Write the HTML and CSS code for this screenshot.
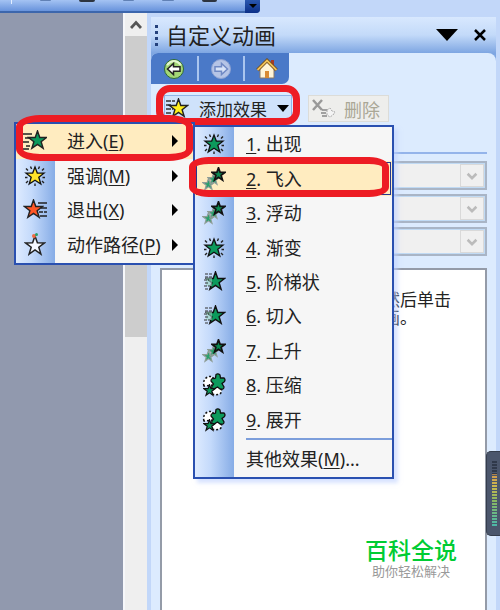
FILE: index.html
```html
<!DOCTYPE html>
<html lang="zh-CN">
<head>
    <meta charset="UTF-8">
    <meta name="viewport" content="width=device-width, initial-scale=1.0">
    <title>自定义动画</title>
    <link rel="stylesheet" href="styles.css">
</head>
<body>
<svg class="sprite" aria-hidden="true">
    <symbol id="star" viewBox="-11 -11 22 22">
        <path d="M0-10 2.4-3.2 9.5-3.1 3.8 1.2 5.9 8.1 0 4-5.9 8.1-3.8 1.2-9.5-3.1-2.4-3.2Z"/>
    </symbol>
    <symbol id="burst" viewBox="0 0 24 24">
        <path d="M12 3 14.300 9 21 9.200 15.800 13.300 17.800 20 12 16.200 6.200 20 8.200 13.300 3 9.200 9.700 9Z" stroke="#111" stroke-width="1.300"/>
        <path d="M7.500 2.500 8.600 5M16.500 2.500 15.400 5M3 4.500 5 6.500M21 4.500 19 6.500M2 13.500H4.500M22 13.500H19.500M3 19 5 17M21 19 19 17M12 19.500V22" stroke="#222" stroke-width="1.400" fill="none"/>
    </symbol>
    <symbol id="trail" viewBox="0 0 24 24">
        <g fill="#27a06c" stroke="#8f9d97" stroke-width="2">
            <use href="#star" x="0" y="11" width="13" height="13"/>
            <use href="#star" x="5" y="6" width="13" height="13"/>
        </g>
        <use href="#star" x="9" y="0" width="15" height="15" fill="#0a8a50" stroke="#111" stroke-width="2.500"/>
    </symbol>
    <symbol id="wipe" viewBox="0 0 24 24">
        <use href="#star" x="3" y="1" width="21" height="21" fill="#0c9a5c" stroke="#111" stroke-width="1.500"/>
        <path d="M4 8H10V16H4Z" fill="#9ad3c0" opacity=".6"/>
        <path d="M3 4H11M3 7H10M2 10H7M3 13H7M2 16H8M3 19H8" stroke="#333" stroke-width="1.200" stroke-dasharray="3 1" fill="none"/>
    </symbol>
    <symbol id="scale" viewBox="0 0 24 24">
        <path d="M2 13C0 6 6 2 11 4V12ZM10 21C18 23 21 20 19 15L12 13Z" fill="#fff" stroke="#111" stroke-width="1.500" stroke-dasharray="2 2"/>
        <path d="M14 1.500Q16 0 18 2L18.500 5 22 5Q24 7 22 9L20 10.500 22 14Q22 17 18 16L15.500 14 12 16Q9 16 10 13L11.500 11 9 8Q9 5 12 5.500L13.500 5Z" fill="#0c9a5c" stroke="#111" stroke-width="1.300"/>
        <use href="#star" x="1" y="11" width="13" height="13" fill="#0c9a5c" stroke="#111" stroke-width="2"/>
    </symbol>
</svg>

<div class="app">
    <header class="toolbar">
        <div class="toolbar-strip">
            <span class="toolbar-sep"></span>
            <span class="toolbar-icon small"></span>
            <span class="toolbar-icon"></span>
            <span class="toolbar-icon small"></span>
            <span class="toolbar-icon small"></span>
            <span class="toolbar-icon"></span>
            <button class="toolbar-more" aria-label="工具栏选项"></button>
        </div>
    </header>

    <div class="main">
        <div class="workspace"></div>
        <div class="scrollbar">
            <button class="scroll-up" aria-label="向上滚动">
                <svg width="12" height="9" viewBox="0 0 12 9"><path d="M1 8 6 2.500 11 8" fill="none" stroke="#555" stroke-width="2.800"/></svg>
            </button>
            <div class="scroll-thumb"></div>
        </div>

        <aside class="pane">
            <div class="pane-title">
                <span class="grip"><i></i><i></i><i></i><i></i></span>
                <h1>自定义动画</h1>
                <button class="title-button" aria-label="其他任务窗格">
                    <svg width="22" height="12" viewBox="0 0 22 12"><path d="M0 0H22L11 12Z"/></svg>
                </button>
                <button class="title-button" aria-label="关闭">
                    <svg width="12" height="12" viewBox="0 0 12 12"><path d="M1 1 11 11M11 1 1 11" stroke="#000" stroke-width="2.500"/></svg>
                </button>
            </div>

            <div class="pane-body">
                <nav class="pane-nav">
                    <button aria-label="后退">
                        <svg width="22" height="22" viewBox="0 0 22 22">
                            <circle cx="11" cy="11" r="9.500" fill="#a3d676" stroke="#2f6a35"/>
                            <path d="M4 7Q11-1 18 7" fill="none" stroke="#e3f5cf" stroke-width="2"/>
                            <path d="M4.500 11 10.500 5.500V8.800H17V13.200H10.500V16.500Z" fill="#fff" stroke="#222" stroke-width="1.500"/>
                        </svg>
                    </button>
                    <button aria-label="前进">
                        <svg width="22" height="22" viewBox="0 0 22 22">
                            <circle cx="11" cy="11" r="9.500" fill="#b5c4e6" stroke="#8fa3d2"/>
                            <path d="M17.500 11 11.500 5.500V8.800H5V13.200H11.500V16.500Z" fill="#d9e4f8" stroke="#7089c4" stroke-width="1.500"/>
                        </svg>
                    </button>
                    <button aria-label="开始">
                        <svg width="22" height="22" viewBox="0 0 22 22">
                            <path d="M15 2H18V9H15Z" fill="#a63a26"/>
                            <path d="M4 11 11 4 18 11V20H4Z" fill="#fff4d8" stroke="#8a7866"/>
                            <path d="M1.500 12 11 2.500 20.500 12" fill="none" stroke="#6e4a18" stroke-width="3.500"/>
                            <path d="M1.500 12 11 2.500 20.500 12" fill="none" stroke="#eec05a" stroke-width="1.800"/>
                            <path d="M9 13H13V20H9Z" fill="#d98a32"/>
                        </svg>
                    </button>
                </nav>

                <div class="actions">
                    <div class="add-effect">
                        <button class="add-button ring">
                            <svg width="24" height="22" viewBox="0 0 24 22">
                                <path d="M1 4H10M1 8H7M1 12H8M1 16H7M1 20H6" stroke="#333" stroke-width="1.500" stroke-dasharray="5 1"/>
                                <use href="#star" x="3" y="1" width="21" height="21" fill="#ffef1f" stroke="#222" stroke-width="1.500"/>
                            </svg>
                            <span>添加效果</span>
                            <svg width="12" height="7" viewBox="0 0 12 7"><path d="M0 0H12L6 7Z"/></svg>
                        </button>

                        <div class="menu effect-menu" role="menu">
                            <button class="item active ring" role="menuitem">
                                <svg class="icon" viewBox="0 0 24 24">
                                    <path d="M0 5H9M2 9H7M0 13H6M3 17H7M0 20H6" stroke="#222" stroke-width="1.400"/>
                                    <use href="#star" x="4" y="1" width="21" height="21" fill="#0c9a5c" stroke="#222" stroke-width="1.500"/>
                                </svg>
                                <span class="label">进入(<u>E</u>)</span><span class="arrow"></span>
                            </button>
                            <button class="item" role="menuitem">
                                <svg class="icon" viewBox="0 0 24 24" fill="#ffe329"><use href="#burst"/></svg>
                                <span class="label">强调(<u>M</u>)</span><span class="arrow"></span>
                            </button>
                            <button class="item" role="menuitem">
                                <svg class="icon" viewBox="0 0 24 24">
                                    <path d="M15 5H24M18 10H24M16 14H20M21 14H24M17 18H24" stroke="#222" stroke-width="1.400"/>
                                    <use href="#star" x="0" y="1" width="21" height="21" fill="#ff5626" stroke="#222" stroke-width="1.500"/>
                                </svg>
                                <span class="label">退出(<u>X</u>)</span><span class="arrow"></span>
                            </button>
                            <button class="item" role="menuitem">
                                <svg class="icon" viewBox="0 0 24 24">
                                    <use href="#star" x="1" y="2" width="22" height="22" fill="#f4f8ff" stroke="#222" stroke-width="1.500"/>
                                    <circle cx="11" cy="3" r="2" fill="#ef6a42"/><circle cx="13.500" cy="1.500" r="1.500" fill="#27a06c"/>
                                </svg>
                                <span class="label">动作路径(<u>P</u>)</span><span class="arrow"></span>
                            </button>
                        </div>

                        <div class="menu enter-menu" role="menu">
                            <div class="items">
                                <button class="item" role="menuitem"><svg class="icon" fill="#0c9a5c"><use href="#burst"/></svg><span class="label"><u>1</u>. 出现</span></button>
                                <button class="item active ring" role="menuitem"><svg class="icon"><use href="#trail"/></svg><span class="label"><u>2</u>. 飞入</span></button>
                                <button class="item" role="menuitem"><svg class="icon"><use href="#trail"/></svg><span class="label"><u>3</u>. 浮动</span></button>
                                <button class="item" role="menuitem"><svg class="icon" fill="#0c9a5c"><use href="#burst"/></svg><span class="label"><u>4</u>. 渐变</span></button>
                                <button class="item" role="menuitem"><svg class="icon"><use href="#wipe"/></svg><span class="label"><u>5</u>. 阶梯状</span></button>
                                <button class="item" role="menuitem"><svg class="icon"><use href="#wipe"/></svg><span class="label"><u>6</u>. 切入</span></button>
                                <button class="item" role="menuitem"><svg class="icon"><use href="#trail"/></svg><span class="label"><u>7</u>. 上升</span></button>
                                <button class="item" role="menuitem"><svg class="icon"><use href="#scale"/></svg><span class="label"><u>8</u>. 压缩</span></button>
                                <button class="item" role="menuitem"><svg class="icon"><use href="#scale"/></svg><span class="label"><u>9</u>. 展开</span></button>
                            </div>
                            <hr>
                            <button class="item more" role="menuitem"><span class="icon"></span><span class="label">其他效果(<u>M</u>)...</span></button>
                        </div>
                    </div>

                    <button class="delete-button" disabled>
                        <svg width="24" height="20" viewBox="0 0 24 20">
                            <path d="M1 1 10 11M10 1 1 11" stroke="#999" stroke-width="2.500"/>
                            <path d="M10 11H15M9 14H14M10 17H15" stroke="#888" stroke-width="1.500"/>
                            <path d="M15 11 18 9 20 12 23 13 21 16 18 18 15 16Z" fill="#f4f4f4" stroke="#aaa" stroke-dasharray="2 1"/>
                        </svg>
                        <span>删除</span>
                    </button>
                </div>

                <div class="options">
                    <div class="combo"><select aria-label="开始" disabled></select><svg viewBox="0 0 24 24"><path d="M7 10 12 15 17 10"/></svg></div>
                    <div class="combo"><select aria-label="属性" disabled></select><svg viewBox="0 0 24 24"><path d="M7 10 12 15 17 10"/></svg></div>
                    <div class="combo"><select aria-label="速度" disabled></select><svg viewBox="0 0 24 24"><path d="M7 10 12 15 17 10"/></svg></div>
                </div>

                <div class="effect-list">
                    <p>然后单击<br>画。</p>
                </div>
            </div>
        </aside>
    </div>

    <div class="watermark">
        <strong>百科全说</strong>
        <span>助你轻松解决</span>
    </div>
    <div class="meter"><div class="meter-bars"></div></div>
</div>
</body>
</html>
```

FILE: styles.css
```css
* {
    box-sizing: border-box;
}
body {
    margin: 0;
    font-family: "Noto Sans", "Noto Sans CJK SC", sans-serif;
    font-size: 18px;
    color: #222;
}
button {
    padding: 0;
    border: none;
    background: none;
    font: inherit;
    color: inherit;
}
svg {
    display: block;
    flex: none;
}
.sprite {
    position: absolute;
    width: 0;
    height: 0;
}
.app {
    position: relative;
    display: flex;
    flex-direction: column;
    height: 100vh;
    overflow: hidden;
    background: #c2d7f9;
}

/* Top toolbar */
.toolbar {
    height: 13px;
    flex: none;
}
.toolbar-strip {
    display: flex;
    align-items: flex-start;
    gap: 28px;
    width: 260px;
    height: 13px;
    padding-left: 11px;
    border-bottom: 2px solid #3c66ac;
    border-radius: 0 0 4px 0;
    background: linear-gradient(#a4c3f3, #6893dc);
}
.toolbar-sep {
    width: 1px;
    height: 4px;
    background: #e3eeff;
}
.toolbar-icon {
    width: 16px;
    height: 2px;
    border-radius: 0 0 3px 3px;
    background: #2d3440;
}
.toolbar-icon.small {
    width: 12px;
    height: 1px;
    background: #6181b5;
}
.toolbar-more {
    display: flex;
    align-items: flex-start;
    justify-content: center;
    width: 15px;
    height: 13px;
    margin-left: auto;
    flex: none;
    border-radius: 0 0 4px 0;
    background: linear-gradient(#2b58b0, #0b2f88);
}
.toolbar-more::after {
    content: "";
    margin-top: 4px;
    border: 4px solid transparent;
    border-top-color: #000;
    border-bottom: none;
}

.main {
    display: flex;
    flex: 1;
    min-height: 0;
}
.workspace {
    flex: 1;
    background: #9199ae;
}

/* Slide scrollbar */
.scrollbar {
    width: 24px;
    border-left: 2px solid #f6f7fa;
    background: #efefef;
}
.scroll-up {
    display: flex;
    align-items: center;
    justify-content: center;
    width: 100%;
    height: 23px;
}
.scroll-thumb {
    height: 301px;
    background: #cdcdcd;
}

/* Task pane */
.pane {
    display: flex;
    flex-direction: column;
    width: 353px;
    padding: 4px 4px 0;
    background: #c2d7f9;
}
/* runs 8px under the body so its rounded corner sits on the blue */
.pane-title {
    display: flex;
    align-items: center;
    height: 44px;
    flex: none;
    margin-bottom: -8px;
    padding: 0 10px 8px 4px;
    background: linear-gradient(#d8e8fe, #c3daf9 18px, #7ea6e2 36px);
}
.grip {
    display: grid;
    gap: 3px;
    margin-right: 8px;
}
.grip i {
    width: 3px;
    height: 3px;
    background: #24417c;
}
.pane-title h1 {
    flex: 1;
    margin: 0;
    font-size: 22px;
    font-weight: 400;
    line-height: 32px;
}
.title-button + .title-button {
    margin-left: 16px;
}
.pane-body {
    display: flex;
    flex-direction: column;
    flex: 1;
    min-height: 0;
    border-radius: 7px 8px 0 0;
    background: #dcebfe;
}
.pane-nav {
    display: flex;
    align-items: center;
    width: 138px;
    height: 31px;
    flex: none;
    border-radius: 7px 0 7px 0;
    background: #4a79c8;
}
.pane-nav button {
    display: flex;
    align-items: center;
    justify-content: center;
    width: 46px;
    height: 25px;
}
.pane-nav button + button {
    border-left: 2px solid #a9c5ef;
}

/* Add / delete buttons */
.actions {
    display: flex;
    align-items: flex-start;
    gap: 16px;
    height: 70px;
    flex: none;
    margin: 0 9px;
    padding: 11px 0 0 4px;
    border-bottom: 2px solid #94b4ea;
}
.add-effect {
    position: relative;
    z-index: 1;
}
.add-button {
    position: relative;
    display: flex;
    align-items: center;
    gap: 10px;
    width: 128px;
    height: 26px;
    border: 1px solid #8fb4e8;
    background: #cfe2fb;
    font-size: 17px;
}
.delete-button {
    display: flex;
    align-items: center;
    gap: 8px;
    width: 81px;
    height: 27px;
    padding-left: 3px;
    border: 1px solid #dcdcd8;
    background: #eeeeec;
    color: #aaa796;
}

/* Red marker around the clicked controls */
.ring::after {
    content: "";
    position: absolute;
    inset: -11px -9px -5px;
    border: 7px solid #ed1c24;
    border-radius: 14px;
}

/* Popup menus */
.menu {
    position: absolute;
    display: flex;
    flex-direction: column;
    border: 2px solid #2a50b0;
    background: linear-gradient(90deg, #deebff, #c4dafb 40%, #86ace6) no-repeat 0 0 / 39px 100% #f6f6f6;
}
.effect-menu {
    top: 27px;
    left: -150px;
    width: 181px;
    height: 143px;
    padding-bottom: 1px;
}
.enter-menu {
    top: 30px;
    left: 29px;
    width: 201px;
    height: 354px;
    box-shadow: 4px 4px 4px rgba(190, 208, 255, 0.6);
}
.items {
    display: flex;
    flex-direction: column;
    height: 310px;
}
.item {
    position: relative;
    display: flex;
    align-items: center;
    flex: 1;
    padding: 0 15px 0 7px;
    line-height: 24px;
    text-align: left;
    white-space: nowrap;
}
.icon {
    width: 24px;
    height: 24px;
    margin-right: 20px;
    flex: none;
}
.label {
    flex: 1;
}
.label u {
    text-underline-offset: 2px;
}
.arrow {
    border: 6px solid transparent;
    border-left-color: #000;
    border-right: none;
}
.item.active {
    background: #ffecc0;
}
.effect-menu .ring::after {
    inset: -9px 0 -2px;
    border-radius: 24px / 12px;
}
.enter-menu .ring::after {
    inset: -4px 3px -1px -6px;
    border-radius: 20px / 10px;
}
.enter-menu .item.active {
    outline: 1px solid #24378e;
    outline-offset: -2px;
}
.menu hr {
    width: 146px;
    height: 2px;
    margin: 1px 0 0 auto;
    border: none;
    background: #7c9edb;
}

/* Disabled settings */
.options {
    display: grid;
    gap: 4px;
    margin: 7px 9px 12px;
}
.combo {
    display: flex;
    height: 29px;
    border: 2px solid #a9b5c6;
    background: #f0f0f0;
    box-shadow: inset 0 0 0 1px #c0daf4;
}
.combo select {
    flex: 1;
    appearance: none;
    border: none;
    background: none;
}
.combo svg {
    width: 24px;
    height: 23px;
    margin: 1px;
    border: 1px solid #d9d9d9;
    fill: none;
    stroke: #bbb;
    stroke-width: 3px;
}
.effect-list {
    flex: 1;
    margin: 0 9px;
    padding: 20px 34px 0 0;
    border: 2px solid #949ba8;
    border-bottom: none;
    background: #fff;
}
.effect-list p {
    width: 68px;
    margin: 0 0 0 auto;
    font-family: "Noto Sans CJK SC", sans-serif;
    font-size: 17px;
    line-height: 18px;
    white-space: nowrap;
}

/* Overlays */
.watermark {
    position: absolute;
    right: 43px;
    bottom: 30px;
    display: grid;
    justify-items: center;
    font-family: "Noto Sans CJK SC", sans-serif;
}
.watermark strong {
    font-size: 23px;
    font-weight: 500;
    line-height: 26px;
    color: #00cc33;
}
.watermark span {
    font-size: 13px;
    line-height: 18px;
    color: #999;
}
.meter {
    position: absolute;
    right: 0;
    bottom: 74px;
    width: 14px;
    height: 85px;
    padding: 9px 3px 9px 5px;
    border: 1px solid #353d4c;
    border-right: none;
    border-radius: 5px 0 0 5px;
    background: #4b566c;
}
.meter-bars {
    height: 100%;
    background:
        repeating-linear-gradient(transparent 0 2px, #4b566c 2px 3px),
        linear-gradient(#30394a 20%, #d49a4c 21%, #c9b850 40%, #8cb860 60%, #4bb8a8);
}
```
